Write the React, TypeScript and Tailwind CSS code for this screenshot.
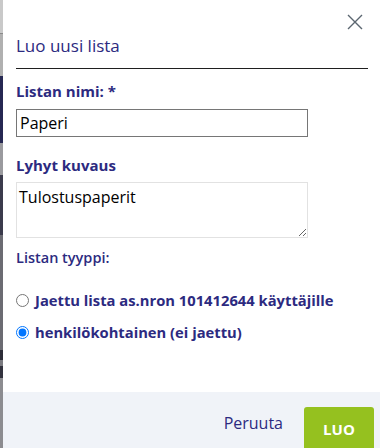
import React from "react";

function CloseIcon() {
  return (
    <svg width="16" height="16" viewBox="0 0 16 16" fill="none">
      <path d="M1.5 1.5 L14.5 14.5 M14.5 1.5 L1.5 14.5" stroke="#5b6670" strokeWidth="1.4" strokeLinecap="square" />
    </svg>
  );
}

export default function App() {
  return (
    <div
      className="flex h-[448px] w-[380px] overflow-hidden bg-white"
      style={{ fontFamily: '"Open Sans", "Noto Sans", sans-serif' }}
    >
      <div className="flex w-[3px] flex-col">
        <div className="h-[33px] bg-[#c9c9c9]" />
        <div className="h-[1px] bg-[#8a8a8a]" />
        <div className="h-[42px] bg-[#b0b0b0]" />
        <div className="h-[67px] bg-[#262852]" />
        <div className="h-[32px] bg-[#9a9a9e]" />
        <div className="h-[60px] bg-[#3b3b4c]" />
        <div className="h-[115px] bg-[#6b6b72]" />
        <div className="h-[10px] bg-[#2d2d38]" />
        <div className="h-[6px] bg-[#7a7a80]" />
        <div className="h-[12px] bg-[#33333e]" />
        <div className="flex-1 bg-[#8c8c90]" />
      </div>
      <div className="flex flex-1 flex-col">
        <div className="flex flex-col pl-[13px] pr-[12px]">
          <div className="flex h-[34px] justify-end pt-[14px] pr-[5px]">
            <CloseIcon />
          </div>
          <div className="text-[17px] leading-[24px] text-[#2c2a80]">Luo uusi lista</div>
          <div className="mt-[10px] h-px bg-[#1f1f1f]" />
          <div className="mt-[12px] text-[15px] font-bold leading-[20px] text-[#2c2a80]">Listan nimi: *</div>
          <input
            className="mt-[8px] h-[28px] w-[292px] border border-[#767676] px-[3px] text-[16px] text-black outline-none"
            defaultValue="Paperi"
          />
          <div className="mt-[18px] text-[15px] font-bold leading-[20px] text-[#2c2a80]">Lyhyt kuvaus</div>
          <textarea
            className="mt-[7px] h-[56px] w-[292px] border border-[#e2e2e2] px-[2px] py-[3px] text-[16px] leading-[22px] text-black outline-none"
            defaultValue="Tulostuspaperit"
          />
          <div className="mt-[10px] text-[14.5px] font-semibold leading-[20px] text-[#2c2a80]">Listan tyyppi:</div>
          <label className="mt-[22px] flex items-center gap-[6px] text-[14.75px] font-bold leading-[20px] text-[#2c2a80]">
            <input type="radio" name="t" className="m-0 h-[13px] w-[13px]" />
            Jaettu lista as.nron 101412644 käyttäjille
          </label>
          <label className="mt-[12px] flex items-center gap-[6px] text-[14.75px] font-bold leading-[20px] text-[#2c2a80]">
            <input type="radio" name="t" defaultChecked className="m-0 h-[13px] w-[13px]" />
            henkilökohtainen (ei jaettu)
          </label>
        </div>
        <div className="mt-auto flex h-[56px] shrink-0 items-start justify-end gap-[21px] bg-[#f0f3f8] pr-[6px] pt-[15px]">
          <button className="mt-[4px] text-[16px] leading-[24px] text-[#2c2a80]">Peruuta</button>
          <button className="h-[44px] w-[70px] rounded-[3px] bg-[#95c11f] text-[15px] font-bold text-white">LUO</button>
        </div>
      </div>
    </div>
  );
}
